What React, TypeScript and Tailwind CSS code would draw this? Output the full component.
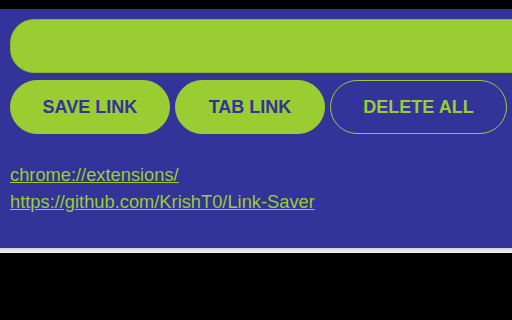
export default function App() {
  const links = ["chrome://extensions/", "https://github.com/KrishT0/Link-Saver"];

  return (
    <div className="flex h-[320px] w-full flex-col bg-black font-['Liberation_Sans',Arial,sans-serif]">
      <div className="h-[9px] shrink-0" />

      {/* Popup body */}
      <div className="h-[239px] shrink-0 overflow-hidden bg-[#333399] pl-[10px] pt-[10px]">
        <input
          type="text"
          className="block h-[54px] w-[560px] rounded-[24px] border border-[#86b82c] bg-[#9acd32] px-4 text-lg text-[#333399] outline-none"
        />

        <div className="mt-[7px] flex gap-[5px]">
          <button className="rounded-[27px] border border-[#9acd32] bg-[#9acd32] px-[31.5px] py-4 text-[18px] leading-[20px] font-bold text-[#333399]">
            SAVE LINK
          </button>
          <button className="rounded-[27px] border border-[#9acd32] bg-[#9acd32] px-[33px] py-4 text-[18px] leading-[20px] font-bold text-[#333399]">
            TAB LINK
          </button>
          <button className="rounded-[27px] border border-[#9acd32] bg-transparent px-[32px] py-4 text-[18px] leading-[20px] font-bold text-[#9acd32]">
            DELETE ALL
          </button>
        </div>

        <ul className="mt-[27px] flex flex-col">
          {links.map((link) => (
            <li key={link} className="text-[18.3px] leading-[27px]">
              <a href="#" className="text-[#9acd32] underline">
                {link}
              </a>
            </li>
          ))}
        </ul>
      </div>

      {/* Scrollbar strip */}
      <div className="h-[5px] shrink-0 bg-gradient-to-b from-[#d4d4d4] to-[#f4f4f4]" />
    </div>
  );
}
